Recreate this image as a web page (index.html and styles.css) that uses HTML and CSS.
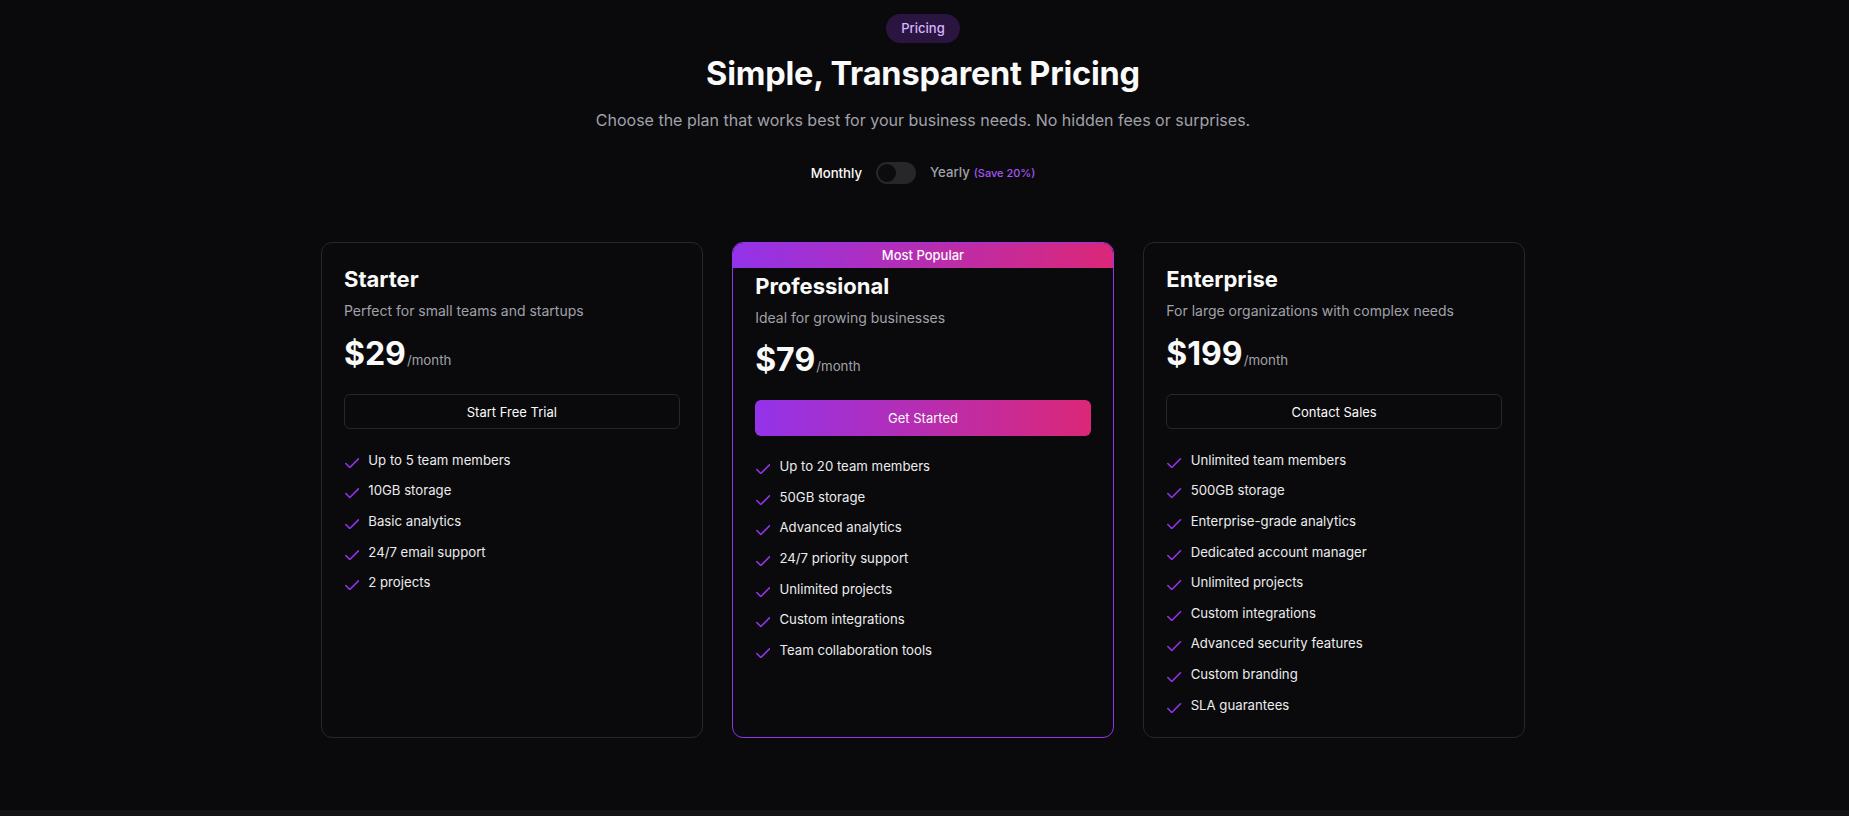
FILE: index.html
```html
<!DOCTYPE html>
<html lang="en">
<head>
    <meta charset="UTF-8">
    <meta name="viewport" content="width=device-width, initial-scale=1.0">
    <title>Pricing</title>
    <link rel="stylesheet" href="styles.css">
</head>
<body>
    <section class="pricing">
        <!-- Cabeçalho -->
        <div class="pricing-head">
            <span class="tag">Pricing</span>
            <h1>Simple, Transparent Pricing</h1>
            <p class="lead">Choose the plan that works best for your business needs. No hidden fees or surprises.</p>
            <div class="billing">
                <span class="billing-label active">Monthly</span>
                <button class="switch" aria-label="Switch to yearly billing"><span class="knob"></span></button>
                <span class="billing-label">Yearly<span class="save">(Save 20%)</span></span>
            </div>
        </div>

        <!-- Planos -->
        <div class="plans">
            <div class="plan">
                <h2>Starter</h2>
                <p class="plan-desc">Perfect for small teams and startups</p>
                <div class="price"><strong>$29</strong><span>/month</span></div>
                <button class="btn">Start Free Trial</button>
                <ul class="features">
                    <li><svg viewBox="3 5 18 13"><path d="M20 6 9 17l-5-5"/></svg>Up to 5 team members</li>
                    <li><svg viewBox="3 5 18 13"><path d="M20 6 9 17l-5-5"/></svg>10GB storage</li>
                    <li><svg viewBox="3 5 18 13"><path d="M20 6 9 17l-5-5"/></svg>Basic analytics</li>
                    <li><svg viewBox="3 5 18 13"><path d="M20 6 9 17l-5-5"/></svg>24/7 email support</li>
                    <li><svg viewBox="3 5 18 13"><path d="M20 6 9 17l-5-5"/></svg>2 projects</li>
                </ul>
            </div>

            <div class="plan popular">
                <div class="ribbon">Most Popular</div>
                <h2>Professional</h2>
                <p class="plan-desc">Ideal for growing businesses</p>
                <div class="price"><strong>$79</strong><span>/month</span></div>
                <button class="btn btn-primary">Get Started</button>
                <ul class="features">
                    <li><svg viewBox="3 5 18 13"><path d="M20 6 9 17l-5-5"/></svg>Up to 20 team members</li>
                    <li><svg viewBox="3 5 18 13"><path d="M20 6 9 17l-5-5"/></svg>50GB storage</li>
                    <li><svg viewBox="3 5 18 13"><path d="M20 6 9 17l-5-5"/></svg>Advanced analytics</li>
                    <li><svg viewBox="3 5 18 13"><path d="M20 6 9 17l-5-5"/></svg>24/7 priority support</li>
                    <li><svg viewBox="3 5 18 13"><path d="M20 6 9 17l-5-5"/></svg>Unlimited projects</li>
                    <li><svg viewBox="3 5 18 13"><path d="M20 6 9 17l-5-5"/></svg>Custom integrations</li>
                    <li><svg viewBox="3 5 18 13"><path d="M20 6 9 17l-5-5"/></svg>Team collaboration tools</li>
                </ul>
            </div>

            <div class="plan">
                <h2>Enterprise</h2>
                <p class="plan-desc">For large organizations with complex needs</p>
                <div class="price"><strong>$199</strong><span>/month</span></div>
                <button class="btn">Contact Sales</button>
                <ul class="features">
                    <li><svg viewBox="3 5 18 13"><path d="M20 6 9 17l-5-5"/></svg>Unlimited team members</li>
                    <li><svg viewBox="3 5 18 13"><path d="M20 6 9 17l-5-5"/></svg>500GB storage</li>
                    <li><svg viewBox="3 5 18 13"><path d="M20 6 9 17l-5-5"/></svg>Enterprise-grade analytics</li>
                    <li><svg viewBox="3 5 18 13"><path d="M20 6 9 17l-5-5"/></svg>Dedicated account manager</li>
                    <li><svg viewBox="3 5 18 13"><path d="M20 6 9 17l-5-5"/></svg>Unlimited projects</li>
                    <li><svg viewBox="3 5 18 13"><path d="M20 6 9 17l-5-5"/></svg>Custom integrations</li>
                    <li><svg viewBox="3 5 18 13"><path d="M20 6 9 17l-5-5"/></svg>Advanced security features</li>
                    <li><svg viewBox="3 5 18 13"><path d="M20 6 9 17l-5-5"/></svg>Custom branding</li>
                    <li><svg viewBox="3 5 18 13"><path d="M20 6 9 17l-5-5"/></svg>SLA guarantees</li>
                </ul>
            </div>
        </div>
    </section>
</body>
</html>
```

FILE: styles.css
```css
* {
    box-sizing: border-box;
}
body {
    margin: 0;
    background: #141416;
    color: #fafafa;
    font-family: Inter, "Noto Sans", sans-serif;
}
.pricing {
    min-height: 810px;
    background: #0a0a0c;
    padding: 14px 3px 0 0;
}
.pricing-head {
    display: flex;
    flex-direction: column;
    align-items: center;
    text-align: center;
}
.tag {
    padding: 5px 15px;
    border-radius: 999px;
    background: #2a1440;
    color: #d8b4fe;
    font-size: 13px;
    line-height: 19px;
    font-weight: 500;
}
h1 {
    margin: 13px 0 0;
    font-size: 32.5px;
    line-height: 36px;
    font-weight: 700;
    letter-spacing: -0.2px;
}
.lead {
    margin: 15px 0 0;
    font-size: 16px;
    line-height: 26px;
    color: #a1a1aa;
}
.billing {
    margin-top: 29px;
    display: flex;
    align-items: center;
    gap: 14px;
    font-size: 13.2px;
    line-height: 19px;
    font-weight: 500;
    color: #a1a1aa;
}
.billing-label.active {
    color: #fafafa;
}
.switch {
    width: 40px;
    height: 22px;
    padding: 2px;
    border: 0;
    border-radius: 11px;
    background: #27272a;
    display: flex;
    cursor: pointer;
}
.knob {
    width: 18px;
    height: 18px;
    border-radius: 50%;
    background: #0c0c0e;
}
.save {
    margin-left: 4px;
    font-size: 11px;
    color: #a855f7;
}
.plans {
    width: 1204px;
    margin: 58px auto 0;
    display: grid;
    grid-template-columns: repeat(3, 1fr);
    gap: 29.5px;
}
.plan {
    border: 1px solid #27272a;
    border-radius: 11px;
    padding: 22px;
    background: #0a0a0c;
}
.plan.popular {
    border-color: #9333ea;
    padding-top: 0;
    overflow: hidden;
}
.ribbon {
    margin: 0 -22px 4px;
    height: 24.5px;
    line-height: 24.5px;
    text-align: center;
    font-size: 13px;
    font-weight: 500;
    background: linear-gradient(to right, #9333ea, #db2777);
}
.plan h2 {
    margin: 0;
    font-size: 22px;
    line-height: 28px;
    font-weight: 700;
}
.plan-desc {
    margin: 8.4px 0 0;
    font-size: 14px;
    line-height: 20px;
    color: #a1a1aa;
}
.price {
    margin-top: 12.5px;
    font-size: 32px;
    line-height: 40px;
}
.price strong {
    font-weight: 700;
}
.price span {
    margin-left: 1px;
    font-size: 13.3px;
    line-height: 1;
    color: #a1a1aa;
}
.btn {
    display: block;
    width: 100%;
    height: 35.4px;
    margin-top: 20px;
    border: 1px solid #27272a;
    border-radius: 6px;
    background: transparent;
    color: #fafafa;
    font-family: inherit;
    font-size: 13px;
    font-weight: 400;
    cursor: pointer;
}
.btn-primary {
    border: 0;
    background: linear-gradient(to right, #9333ea, #db2777);
}
.features {
    list-style: none;
    margin: 21.3px 0 0;
    padding: 0;
    display: flex;
    flex-direction: column;
    gap: 11.65px;
}
.features li {
    display: flex;
    align-items: flex-start;
    gap: 9px;
    font-size: 13.2px;
    line-height: 19px;
    color: #ececee;
}
.features svg {
    width: 14.3px;
    height: 10.3px;
    margin: 7px 0 0 1px;
    flex-shrink: 0;
    fill: none;
    stroke: #9333ea;
    stroke-width: 2;
    stroke-linecap: round;
    stroke-linejoin: round;
}
```
